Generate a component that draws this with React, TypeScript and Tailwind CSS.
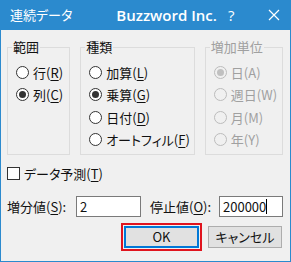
import React from "react";

const font = { fontFamily: '"Noto Sans CJK JP", "Noto Sans", sans-serif' };

function Radio({ label, acc, checked, disabled }: { label: string; acc: string; checked?: boolean; disabled?: boolean }) {
  return (
    <div className="flex items-center h-[22.5px] pl-[4px] whitespace-nowrap">
      <span
        className={
          "w-[13px] h-[13px] rounded-full border flex items-center justify-center shrink-0 " +
          (disabled ? "border-[#bcbcbc] bg-[#f0f0f0]" : "border-[#333] bg-white")
        }
      >
        {checked && <span className={"w-[7px] h-[7px] rounded-full " + (disabled ? "bg-[#c0c0c0]" : "bg-[#333]")} />}
      </span>
      <span className={"ml-[4px] text-[13px] leading-none " + (disabled ? "text-[#a0a0a0]" : "text-[#111]")}>
        {label}(
        {disabled ? acc : <span className="underline underline-offset-2">{acc}</span>})
      </span>
    </div>
  );
}

function Group({ title, disabled, className, children }: { title: string; disabled?: boolean; className: string; children: React.ReactNode }) {
  return (
    <fieldset className={"border border-[#dcdcdc] px-[4px] h-[117px] " + className}>
      <legend className={"px-[1px] text-[13px] leading-[18px] " + (disabled ? "text-[#a0a0a0]" : "text-[#111]")}>{title}</legend>
      <div className="mt-[5px]">{children}</div>
    </fieldset>
  );
}

export default function App() {
  return (
    <div className="w-[291px] h-[262px] flex flex-col bg-[#2b8ace] [font-feature-settings:'palt']" style={font}>
      <div className="h-[30px] flex items-center text-white shrink-0">
        <span className="ml-[10px] text-[13px]">連続データ</span>
        <span className="ml-[44px] text-[15px] font-semibold" style={{ fontFamily: '"Open Sans", sans-serif' }}>
          Buzzword Inc.
        </span>
        <span className="ml-[11px] text-[15px]" style={{ fontFamily: '"Open Sans", sans-serif' }}>?</span>
        <svg className="ml-[34px]" width="12" height="12" viewBox="0 0 12 12">
          <path d="M1 1 L11 11 M11 1 L1 11" stroke="white" strokeWidth="1.2" />
        </svg>
      </div>
      <div className="flex-1 mx-[1px] mb-[1px] bg-[#f0f0f0] pt-[8px] pl-[6px] pr-[7px]">
        <div className="flex">
          <Group title="範囲" className="w-[67px]">
            <Radio label="行" acc="R" />
            <Radio label="列" acc="C" checked />
          </Group>
          <Group title="種類" className="w-[106px] ml-[10px]">
            <Radio label="加算" acc="L" />
            <Radio label="乗算" acc="G" checked />
            <Radio label="日付" acc="D" />
            <Radio label="オートフィル" acc="F" />
          </Group>
          <Group title="増加単位" disabled className="w-[83px] ml-[10px]">
            <Radio label="日" acc="A" checked disabled />
            <Radio label="週日" acc="W" disabled />
            <Radio label="月" acc="M" disabled />
            <Radio label="年" acc="Y" disabled />
          </Group>
        </div>
        <div className="flex items-center h-[18px] mt-[9px]">
          <span className="w-[13px] h-[13px] border border-[#333] bg-white" />
          <span className="ml-[4px] text-[13px] leading-none text-[#111]">
            データ予測(<span className="underline underline-offset-2">T</span>)
          </span>
        </div>
        <div className="flex items-center h-[21px] mt-[14px] text-[13px] text-[#111]">
          <span className="w-[69px]">
            増分値(<span className="underline underline-offset-2">S</span>):
          </span>
          <div className="w-[65px] h-[21px] border border-[#7a7a7a] bg-white flex items-center pl-[3px]">2</div>
          <span className="ml-[9px] w-[69px]">
            停止値(<span className="underline underline-offset-2">O</span>):
          </span>
          <div className="w-[64px] h-[21px] border border-[#7a7a7a] bg-white flex items-center pl-[3px]">
            200000<span className="w-[1px] h-[15px] bg-black" />
          </div>
        </div>
        <div className="flex items-center justify-end mt-[6px] pr-[1px]">
          <div className="border-2 border-[#e0141e] p-[1px]">
            <div className="w-[75px] h-[22px] border-2 border-[#0078d7] bg-[#e1e1e1] flex items-center justify-center text-[13px] text-[#111]">
              OK
            </div>
          </div>
          <div className="ml-[6px] w-[74px] h-[22px] border border-[#adadad] bg-[#e1e1e1] flex items-center justify-center text-[13px] text-[#111]">
            キャンセル
          </div>
        </div>
      </div>
    </div>
  );
}
